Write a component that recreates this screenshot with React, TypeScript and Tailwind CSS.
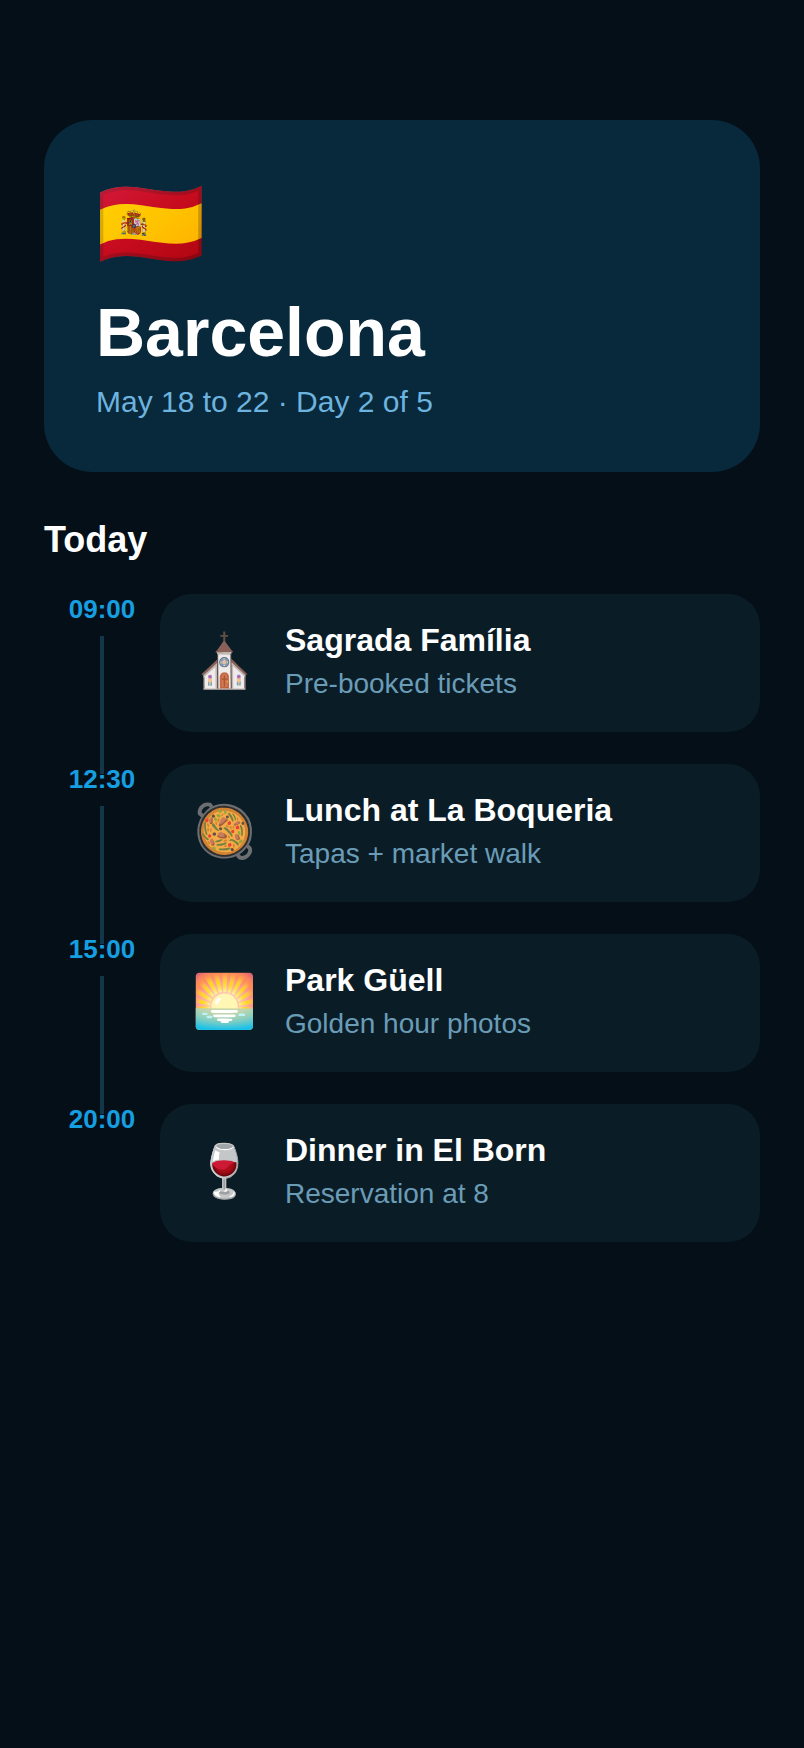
const stops = [
  { time: "09:00", icon: "⛪", title: "Sagrada Família", note: "Pre-booked tickets" },
  { time: "12:30", icon: "🥘", title: "Lunch at La Boqueria", note: "Tapas + market walk" },
  { time: "15:00", icon: "🌅", title: "Park Güell", note: "Golden hour photos" },
  { time: "20:00", icon: "🍷", title: "Dinner in El Born", note: "Reservation at 8" },
];

export default function App() {
  return (
    <main className="min-h-screen bg-[#050f17] px-11 pt-[120px] pb-12 font-['Liberation_Sans',Arial,sans-serif] text-white">
      <header className="rounded-[48px] bg-[#08283b] px-[52px] pt-12 pb-[52px]">
        <div className="text-[88px] leading-[112px]">🇪🇸</div>
        <h1 className="mt-4 text-[68px] leading-[72px] font-bold">Barcelona</h1>
        <p className="mt-4 text-[30px] leading-9 text-[#6db3df]">May 18 to 22 · Day 2 of 5</p>
      </header>

      <h2 className="mt-12 text-[36px] leading-10 font-bold">Today</h2>

      <ol className="mt-[34px] flex flex-col gap-8">
        {stops.map((stop, index) => (
          <li key={stop.time} className="flex">
            <div className="flex w-[116px] shrink-0 flex-col items-center">
              <time className="text-[26px] leading-[30px] font-bold text-[#159ee0]">{stop.time}</time>
              {/* connector runs down behind the next time */}
              {index < stops.length - 1 && <div className="mt-3 -mb-[42px] w-1 flex-1 bg-[#12364a]" />}
            </div>
            <article className="flex min-w-0 flex-1 items-center gap-7 rounded-[32px] bg-[#0a1d27] px-8 pt-7 pb-8">
              <span className="text-[52px] leading-[60px]">{stop.icon}</span>
              <div>
                <h3 className="text-[32px] leading-9 font-bold">{stop.title}</h3>
                <p className="mt-2.5 text-[28px] leading-8 text-[#6b9cb7]">{stop.note}</p>
              </div>
            </article>
          </li>
        ))}
      </ol>
    </main>
  );
}
